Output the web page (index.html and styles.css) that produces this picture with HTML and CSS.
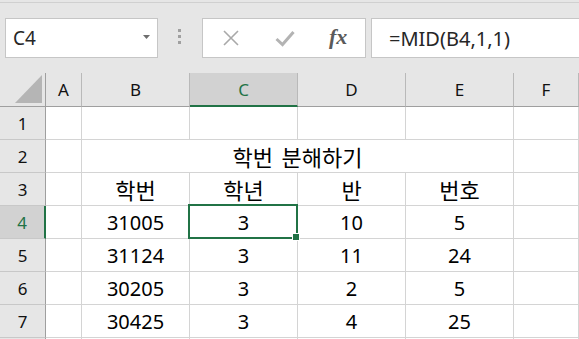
FILE: index.html
```html
<!DOCTYPE html>
<html lang="ko">
<head>
    <meta charset="UTF-8">
    <title>학번 분해하기</title>
    <link rel="stylesheet" href="styles.css">
</head>
<body>
    <div class="formula-bar">
        <div class="name-box">
            <span>C4</span>
            <svg class="drop" width="7" height="4" viewBox="0 0 7 4"><path d="M0 0H7L3.5 4Z" fill="#6e6e6e"/></svg>
        </div>
        <div class="grip"><i></i><i></i><i></i></div>
        <div class="fx-buttons">
            <span class="slot">
                <svg width="18" height="16" viewBox="0 0 18 16"><path d="M2 1L16 15M16 1L2 15" stroke="#a9a9a9" stroke-width="1.6" fill="none"/></svg>
            </span>
            <span class="slot">
                <svg width="20" height="17" viewBox="0 0 20 17"><path d="M1.5 9L7.5 14.5L18.5 2" stroke="#b3b3b3" stroke-width="3" fill="none"/></svg>
            </span>
            <span class="slot fx">fx</span>
        </div>
        <div class="formula-input">=MID(B4,1,1)</div>
    </div>

    <div class="sheet">
        <div class="corner">
            <svg width="27" height="28" viewBox="0 0 27 28"><path d="M0 28H27V0Z" fill="#b5b5b5"/></svg>
        </div>
        <div class="col-head">A</div>
        <div class="col-head">B</div>
        <div class="col-head active">C</div>
        <div class="col-head">D</div>
        <div class="col-head">E</div>
        <div class="col-head">F</div>

        <div class="row-head">1</div>
        <div class="cell"></div><div class="cell"></div><div class="cell"></div><div class="cell"></div><div class="cell"></div><div class="cell"></div>

        <div class="row-head">2</div>
        <div class="cell"></div>
        <div class="cell merged ko">학번 분해하기</div>
        <div class="cell"></div>

        <div class="row-head">3</div>
        <div class="cell"></div><div class="cell ko">학번</div><div class="cell ko">학년</div><div class="cell ko">반</div><div class="cell ko">번호</div><div class="cell"></div>

        <div class="row-head active">4</div>
        <div class="cell"></div><div class="cell">31005</div>
        <div class="cell selected">3<div class="sel-box"><span class="fill-handle"></span></div></div>
        <div class="cell">10</div><div class="cell">5</div><div class="cell"></div>

        <div class="row-head">5</div>
        <div class="cell"></div><div class="cell">31124</div><div class="cell">3</div><div class="cell">11</div><div class="cell">24</div><div class="cell"></div>

        <div class="row-head">6</div>
        <div class="cell"></div><div class="cell">30205</div><div class="cell">3</div><div class="cell">2</div><div class="cell">5</div><div class="cell"></div>

        <div class="row-head">7</div>
        <div class="cell"></div><div class="cell">30425</div><div class="cell">3</div><div class="cell">4</div><div class="cell">25</div><div class="cell"></div>

        <div class="row-head"></div>
        <div class="cell"></div><div class="cell"></div><div class="cell"></div><div class="cell"></div><div class="cell"></div><div class="cell"></div>
    </div>
</body>
</html>
```

FILE: styles.css
```css
html, body {
    margin: 0;
    padding: 0;
    background-color: #e6e6e6;
    overflow: hidden;
    height: 339px;
}
body {
    font-family: 'Noto Sans', 'Noto Sans CJK KR', sans-serif;
    color: #000;
}

/* formula bar */
.formula-bar {
    display: flex;
    align-items: flex-start;
    box-sizing: border-box;
    margin-top: 2px;
    border-top: 1px solid #d0d0d0;
    height: 71px;
    padding: 15px 0 0 5px;
}
.name-box {
    width: 153px;
    height: 40px;
    box-sizing: border-box;
    background-color: #fff;
    border: 1px solid #c6c6c6;
    display: flex;
    align-items: center;
    justify-content: space-between;
    padding: 0 7px 0 7px;
    font-size: 19px;
    color: #262626;
}
.name-box .drop {
    margin-top: -2px;
}
.grip {
    display: flex;
    flex-direction: column;
    gap: 3px;
    margin: 11px 21px 0 20px;
}
.grip i {
    width: 3px;
    height: 3px;
    background-color: #a0a0a0;
}
.fx-buttons {
    width: 164px;
    height: 40px;
    box-sizing: border-box;
    background-color: #fff;
    border: 1px solid #c6c6c6;
    display: flex;
    align-items: center;
    padding-left: 1px;
}
.fx-buttons .slot {
    width: 54px;
    display: flex;
    justify-content: center;
    align-items: center;
}
.fx-buttons .fx {
    font-family: 'Liberation Serif', serif;
    font-style: italic;
    font-weight: bold;
    font-size: 22px;
    color: #5a5a5a;
    margin-top: -3px;
}
.formula-input {
    flex: 1;
    margin-left: 5px;
    margin-right: -2px;
    height: 40px;
    box-sizing: border-box;
    background-color: #fff;
    border: 1px solid #c6c6c6;
    display: flex;
    align-items: center;
    padding-left: 17px;
    font-size: 20px;
    color: #262626;
}

/* sheet grid */
.sheet {
    display: grid;
    grid-template-columns: 46px 36px 108px 108px 108px 108px 1fr;
    grid-template-rows: 34px repeat(8, 33px);
    background-color: #fff;
}
.corner,
.col-head,
.row-head,
.cell {
    box-sizing: border-box;
    display: flex;
    align-items: center;
    justify-content: center;
}
.corner {
    background-color: #e6e6e6;
    border-right: 1px solid #9f9f9f;
    border-bottom: 1px solid #9f9f9f;
    align-items: flex-end;
    justify-content: flex-end;
    padding: 0 3px 3px 0;
}
.col-head {
    background-color: #e6e6e6;
    border-right: 1px solid #b9b9b9;
    border-bottom: 1px solid #9f9f9f;
    font-size: 17px;
    color: #111;
}
.col-head.active {
    background-color: #d2d2d2;
    border-bottom: 2px solid #217346;
    color: #217346;
}
.row-head {
    background-color: #e6e6e6;
    border-right: 1px solid #9f9f9f;
    border-bottom: 1px solid #c8c8c8;
    font-size: 17px;
    color: #111;
}
.row-head.active {
    background-color: #d2d2d2;
    border-right: 2px solid #217346;
    color: #217346;
}
.cell {
    border-right: 1px solid #d4d4d4;
    border-bottom: 1px solid #d4d4d4;
    font-size: 20px;
    color: #000;
}
.cell.ko {
    font-size: 22px;
    word-spacing: 3px;
}
.cell.merged {
    grid-column: span 4;
}
.cell.selected {
    position: relative;
}
.sel-box {
    position: absolute;
    top: -2px;
    left: -2px;
    right: -1px;
    bottom: -1px;
    border: 2px solid #217346;
    z-index: 2;
}
.fill-handle {
    position: absolute;
    right: -4px;
    bottom: -4px;
    width: 6px;
    height: 6px;
    background-color: #217346;
    border: 1px solid #fff;
}
```
